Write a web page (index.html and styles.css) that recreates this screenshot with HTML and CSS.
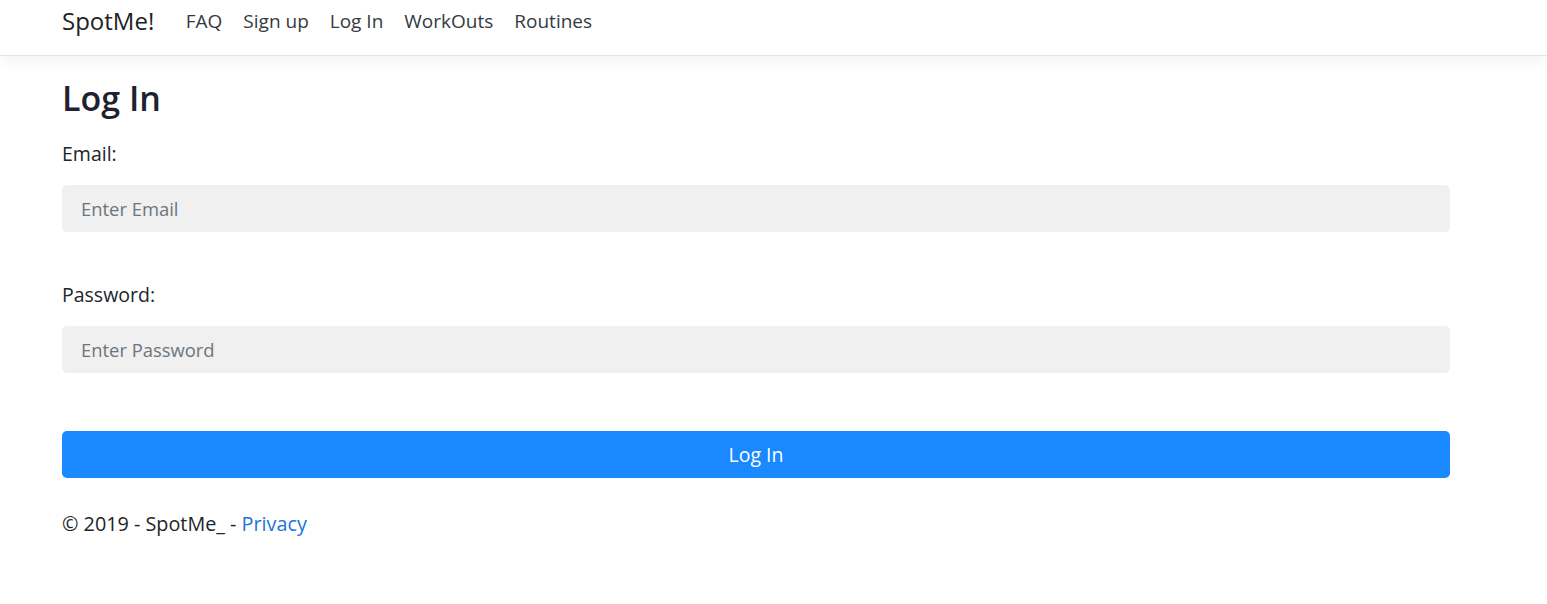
FILE: index.html
```html
<!DOCTYPE html>
<html lang="en">
<head>
<meta charset="utf-8">
<title>Log In - SpotMe</title>
<link rel="stylesheet" href="styles.css">
</head>
<body>
<header class="site-header">
  <nav class="navbar">
    <a class="brand" href="#">SpotMe!</a>
    <ul class="nav-list">
      <li><a class="nav-link" href="#">FAQ</a></li>
      <li><a class="nav-link" href="#">Sign up</a></li>
      <li><a class="nav-link" href="#">Log In</a></li>
      <li><a class="nav-link" href="#">WorkOuts</a></li>
      <li><a class="nav-link" href="#">Routines</a></li>
    </ul>
  </nav>
</header>
<main class="container">
  <h1 class="page-title">Log In</h1>
  <form class="login-form">
    <div class="form-group">
      <label class="form-label" for="email">Email:</label>
      <input class="form-control" id="email" type="email" placeholder="Enter Email">
    </div>
    <div class="form-group">
      <label class="form-label" for="password">Password:</label>
      <input class="form-control" id="password" type="password" placeholder="Enter Password">
    </div>
    <button class="btn-primary" type="button">Log In</button>
  </form>
  <footer class="site-footer">© 2019 - SpotMe_ - <a class="footer-link" href="#">Privacy</a></footer>
</main>
</body>
</html>
```
FILE: styles.css
```css
* { box-sizing: border-box; }
html, body { margin: 0; padding: 0; }
body {
  font-family: "Open Sans", "Noto Sans", "Liberation Sans", sans-serif;
  font-size: 19.5px;
  color: #212529;
  background: #fff;
}
.site-header {
  height: 56px;
  border-bottom: 1px solid #e5e5e5;
  box-shadow: 0 5px 15px rgba(0,0,0,0.05);
  background: #fff;
}
.navbar {
  width: 1388px;
  margin-left: 62px;
  padding-top: 5px;
  display: flex;
  align-items: center;
  height: 32px;
  box-sizing: content-box;
}
.brand {
  font-size: 24px;
  color: #222;
  text-decoration: none;
  margin-right: 21px;
  line-height: 32px;
}
.nav-list {
  list-style: none;
  margin: 0;
  padding: 0;
  display: flex;
}
.nav-link {
  display: block;
  padding: 0 10.5px;
  font-size: 19px;
  color: #343a40;
  text-decoration: none;
  line-height: 32px;
}
.container {
  width: 1388px;
  margin-left: 62px;
}
.page-title {
  font-size: 34px;
  font-weight: 600;
  line-height: 41px;
  margin: 22px 0 20px;
  color: #1e2130;
}
.login-form {
  display: flex;
  flex-direction: column;
}
.form-group { margin-bottom: 48px; }
.form-label {
  display: block;
  line-height: 30px;
  margin-bottom: 16px;
}
.form-control {
  display: block;
  width: 100%;
  height: 47px;
  padding: 0 18px;
  font-family: inherit;
  font-size: 18.4px;
  color: #495057;
  background: #f0f0f0;
  border: 1px solid #f0f0f0;
  border-radius: 5px;
  outline: none;
}
.form-control::placeholder { color: #6c757d; opacity: 1; }
.btn-primary {
  display: block;
  width: 100%;
  height: 47px;
  margin-top: 10px;
  font: inherit;
  color: #fff;
  background: #1a88ff;
  border: none;
  border-radius: 5px;
}
.site-footer {
  margin-top: 31px;
  line-height: 30px;
  font-size: 19.8px;
}
.footer-link { color: #1a73e0; text-decoration: none; }
```
